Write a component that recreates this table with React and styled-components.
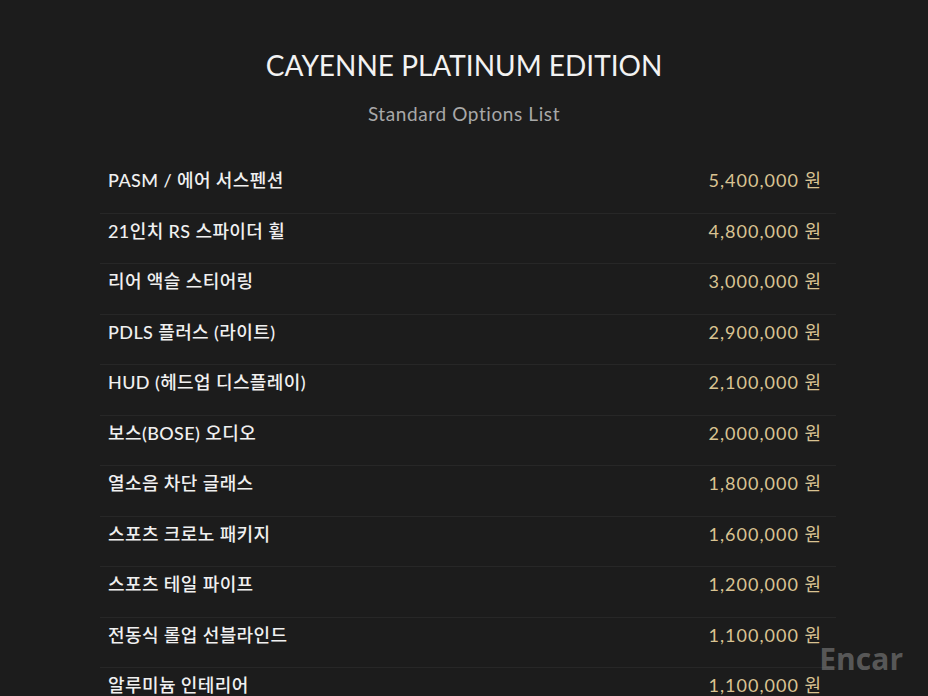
import React from "react";
import styled, { createGlobalStyle } from "styled-components";

const Global = createGlobalStyle`
  html, body { margin: 0; padding: 0; background: #1c1c1c; }
  body { font-family: "Lato", "Noto Sans CJK KR", sans-serif; overflow: hidden; }
`;

const Page = styled.div`
  position: relative;
  width: 928px;
  height: 696px;
  overflow: hidden;
  background: #1c1c1c;
  padding-top: 46px;
  box-sizing: border-box;
`;

const Header = styled.header`
  display: flex;
  flex-direction: column;
  align-items: center;
`;

const Title = styled.h1`
  margin: 0;
  font-family: "Lato", sans-serif;
  font-weight: 400;
  font-size: 28px;
  line-height: 38px;
  letter-spacing: 0;
  color: #f2f2f2;
`;

const Subtitle = styled.div`
  margin-top: 18px;
  font-family: "Lato", sans-serif;
  font-size: 19px;
  line-height: 24px;
  letter-spacing: 0.6px;
  color: #a8a8a8;
`;

const List = styled.ul`
  list-style: none;
  margin: 37px 92px 0 100px;
  padding: 0;
`;

const Row = styled.li`
  display: flex;
  justify-content: space-between;
  align-items: flex-start;
  height: 50.5px;
  box-sizing: border-box;
  padding: 5px 14px 0 8px;
  border-bottom: 1px solid #272727;
`;

const Name = styled.span`
  font-family: "Lato", "Noto Sans CJK KR", sans-serif;
  font-size: 18px;
  font-weight: 500;
  line-height: 24px;
  letter-spacing: 0.4px;
  color: #f0f0f0;
`;

const Price = styled.span`
  font-family: "Lato", "Noto Sans CJK KR", sans-serif;
  font-size: 18px;
  line-height: 24px;
  letter-spacing: 1px;
  color: #d9c392;
`;

const Watermark = styled.div`
  position: absolute;
  right: 25px;
  bottom: 22px;
  font-family: "Open Sans", "Liberation Sans", sans-serif;
  font-weight: 700;
  font-size: 30px;
  line-height: 30px;
  color: rgba(140, 140, 140, 0.55);
`;

const items = [
  ["PASM / 에어 서스펜션", "5,400,000"],
  ["21인치 RS 스파이더 휠", "4,800,000"],
  ["리어 액슬 스티어링", "3,000,000"],
  ["PDLS 플러스 (라이트)", "2,900,000"],
  ["HUD (헤드업 디스플레이)", "2,100,000"],
  ["보스(BOSE) 오디오", "2,000,000"],
  ["열소음 차단 글래스", "1,800,000"],
  ["스포츠 크로노 패키지", "1,600,000"],
  ["스포츠 테일 파이프", "1,200,000"],
  ["전동식 롤업 선블라인드", "1,100,000"],
  ["알루미늄 인테리어", "1,100,000"],
];

export default function App() {
  return (
    <Page>
      <Global />
      <Header>
        <Title>CAYENNE PLATINUM EDITION</Title>
        <Subtitle>Standard Options List</Subtitle>
      </Header>
      <List>
        {items.map(([n, p]) => (
          <Row key={n}>
            <Name>{n}</Name>
            <Price>{p} 원</Price>
          </Row>
        ))}
      </List>
      <Watermark>Encar</Watermark>
    </Page>
  );
}
